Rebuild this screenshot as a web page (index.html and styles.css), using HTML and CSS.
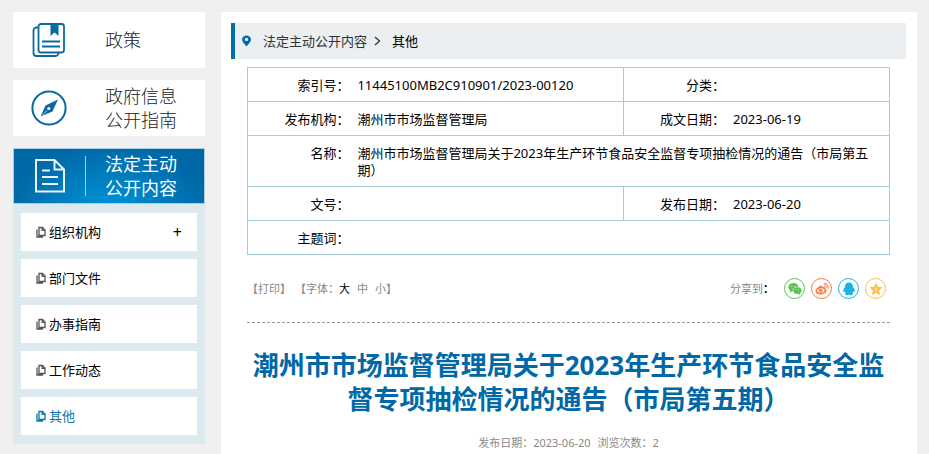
FILE: index.html
```
<!DOCTYPE html>
<html lang="zh-CN">
<head>
<meta charset="utf-8">
<meta name="viewport" content="width=device-width, initial-scale=1">
<title>潮州市市场监督管理局</title>
<link rel="stylesheet" href="styles.css">
</head>
<body>
<svg class="defs" aria-hidden="true">
  <symbol id="pages" viewBox="0 0 10 12">
    <path d="M3 1.500h3.500L9 4v5.500H3z M6.200 1.500V4.300H9 M1 3.500v7.500h6" fill="none" stroke="currentColor" stroke-width="1.300"/>
  </symbol>
</svg>
<div class="layout">
  <nav class="sidebar">
    <a class="card" href="#">
      <span class="card-icon">
        <svg width="34" height="34" viewBox="0 0 34 34" fill="none" stroke="#0a6aa0" stroke-width="1.800">
          <path d="M6.500 4.500H4.500a3 3 0 0 0-3 3v22.500a3 3 0 0 0 3 3h19a3 3 0 0 0 3-3"/>
          <rect x="6.500" y="1" width="25.500" height="28.500" rx="2.500"/>
          <path d="M18.500 1h8v12l-4-3.500-4 3.500z" fill="#0a6aa0" stroke="none"/>
          <path d="M10 18.500h18M10 23.500h18"/>
        </svg>
      </span>
      <span class="card-text">政策</span>
    </a>
    <a class="card" href="#">
      <span class="card-icon">
        <svg width="36" height="36" viewBox="0 0 36 36">
          <circle cx="18" cy="18" r="16.600" fill="none" stroke="#0a6aa0" stroke-width="2"/>
          <path d="M27 9.500 21.500 21.500 9.500 26.500 14.500 15.500z" fill="#0a6aa0"/>
          <circle cx="17.800" cy="18.500" r="1.500" fill="#fff"/>
          <path d="M11 25.500l5-5" stroke="#fff" stroke-width=".7"/>
        </svg>
      </span>
      <span class="card-text">政府信息<br>公开指南</span>
    </a>
    <div class="group">
      <a class="card active" href="#">
        <span class="card-icon">
          <svg width="32" height="34" viewBox="0 0 32 34" fill="none" stroke="#e8f4fb" stroke-width="2">
            <path d="M2 1h18.500L30 10.500V32.500H2z M20.500 1v9.500H30"/>
            <path d="M8 11.500h8M8 18h16M8 25h16"/>
          </svg>
        </span>
        <span class="card-text">法定主动<br>公开内容</span>
      </a>
      <ul class="submenu">
        <li><a href="#"><svg width="10" height="12"><use href="#pages"/></svg>组织机构</a><button type="button" aria-label="展开">+</button></li>
        <li><a href="#"><svg width="10" height="12"><use href="#pages"/></svg>部门文件</a></li>
        <li><a href="#"><svg width="10" height="12"><use href="#pages"/></svg>办事指南</a></li>
        <li><a href="#"><svg width="10" height="12"><use href="#pages"/></svg>工作动态</a></li>
        <li><a class="current" href="#"><svg width="10" height="12"><use href="#pages"/></svg>其他</a></li>
      </ul>
    </div>
  </nav>
  <main class="main">
    <div class="crumbs">
      <svg width="9" height="12" viewBox="0 0 8 12" preserveAspectRatio="none"><path fill-rule="evenodd" d="M4 .5a4 4 0 0 1 4 4C8 7 5.500 9 4 11.500 2.500 9 0 7 0 4.500a4 4 0 0 1 4-4zm0 2.300a1.600 1.600 0 1 0 0 3.200 1.600 1.600 0 0 0 0-3.200z" fill="#0068a6"/></svg>
      <a class="crumb-parent" href="#">法定主动公开内容</a>
      <svg width="7" height="10" viewBox="0 0 7 10"><path d="M1 1l4.500 4L1 9" fill="none" stroke="#333" stroke-width="1.300"/></svg>
      <a class="crumb-current" href="#">其他</a>
    </div>
    <div class="content">
      <table class="info">
        <colgroup><col class="c-label"><col class="c-wide"><col class="c-label"><col></colgroup>
        <tbody>
          <tr><th scope="row">索引号：</th><td>11445100MB2C910901/2023-00120</td><th scope="row">分类：</th><td></td></tr>
          <tr><th scope="row">发布机构：</th><td>潮州市市场监督管理局</td><th scope="row">成文日期：</th><td>2023-06-19</td></tr>
          <tr><th scope="row">名称：</th><td colspan="3">潮州市市场监督管理局关于2023年生产环节食品安全监督专项抽检情况的通告（市局第五期）</td></tr>
          <tr><th scope="row">文号：</th><td></td><th scope="row">发布日期：</th><td>2023-06-20</td></tr>
          <tr><th scope="row">主题词：</th><td colspan="3"></td></tr>
        </tbody>
      </table>
      <div class="tools">
        <div class="tool-text">
          <button type="button">【打印】</button>
          <span class="sizes">【字体：<button type="button" class="on">大</button><button type="button">中</button><button type="button">小</button>】</span>
        </div>
        <div class="share">
          <span class="share-label">分享到<b>：</b></span>
          <a class="wechat" href="#" aria-label="微信"><svg viewBox="0 0 16 16"><ellipse cx="6.200" cy="6" rx="5.800" ry="4.800"/><path d="M2.500 9 2 12l3-1.800z"/><ellipse cx="10.800" cy="9.800" rx="5" ry="4.200" stroke="#fff" stroke-width=".6"/><path d="M11 13l3 1.800-.5-2.800z"/><g fill="#fff"><circle cx="4.400" cy="4.800" r=".6"/><circle cx="8" cy="4.800" r=".6"/><circle cx="9.300" cy="8.800" r=".5"/><circle cx="12.300" cy="8.800" r=".5"/></g></svg></a>
          <a class="weibo" href="#" aria-label="微博"><svg viewBox="0 0 16 16"><path fill-rule="evenodd" d="M6.200 4.200c1.300-.5 2.100.2 1.700 1.700 2-.8 3.700-.4 3.300 1.300 2.900.9 2.600 4-.2 5.700-3.200 2-8.200 1.700-9.900-.5C-.8 9.800 3 5.300 6.200 4.200zM6.300 7.300c-2.400.2-4.200 1.500-4 3.100s2.200 2.500 4.600 2.200 4.200-1.700 4-3.200-2.200-2.400-4.600-2.100z"/><ellipse cx="6.300" cy="10.200" rx="2.500" ry="2.100"/><circle cx="5.700" cy="10.600" r=".7" fill="#fff"/><path d="M10 2c3.300-.8 5.800 2 4.800 5.500M10.300 4.300c1.700-.4 2.900.8 2.400 2.600" fill="none" stroke="currentColor" stroke-width="1.200"/></svg></a>
          <a class="qq" href="#" aria-label="QQ"><svg viewBox="0 0 16 16"><path d="M8 .5c3 0 4.700 2.200 4.600 5.200 1.500 2 2.500 4 1.800 5.600-.4.400-1-.2-1.400-.8-.2.900-.7 1.700-1.300 2.200 1.500.8 1 2.300-1.300 2.300-1.100 0-1.900-.3-2.400-.8-.5.500-1.300.8-2.400.8-2.300 0-2.800-1.500-1.300-2.300-.6-.5-1.100-1.300-1.300-2.200-.4.600-1 1.200-1.400.8C.9 9.700 1.900 7.700 3.400 5.700 3.300 2.700 5 .5 8 .5z"/></svg></a>
          <a class="qzone" href="#" aria-label="QQ空间"><svg viewBox="0 0 16 16"><path d="M8 .8l2.200 4.700 5.200.6-3.900 3.500 1.100 5.200L8 12.200l-4.600 2.600 1.100-5.200L.6 6.100l5.200-.6z"/><path d="M6 7h3.800L6.500 10h3.800" fill="none" stroke="#fff" stroke-width=".5"/></svg></a>
        </div>
      </div>
      <h1>潮州市市场监督管理局关于2023年生产环节食品安全监督专项抽检情况的通告（市局第五期）</h1>
      <p class="meta"><span>发布日期：2023-06-20</span><span>浏览次数：2</span></p>
    </div>
  </main>
</div>
</body>
</html>
```
FILE: styles.css
```
* { box-sizing: border-box; }

body {
  margin: 0;
  background: #f0f0f0;
  color: #000;
  font: 13px/17px "Noto Sans", "Noto Sans CJK SC", sans-serif;
}

a { color: inherit; text-decoration: none; }

button {
  padding: 0;
  border: 0;
  background: none;
  color: inherit;
  font: inherit;
  cursor: pointer;
}

.defs { position: absolute; width: 0; height: 0; }

.layout {
  display: flex;
  gap: 16px;
  min-height: 100vh;
  padding: 12px 12px 0 13px;
}

.sidebar {
  flex: none;
  display: flex;
  flex-direction: column;
  gap: 12px;
  width: 192px;
}

.card {
  display: flex;
  align-items: center;
  height: 56px;
  background: #fff;
  color: #222;
  font-size: 18px;
  font-weight: 300;
  line-height: 24px;
}

.card-icon {
  display: flex;
  justify-content: center;
  width: 72px;
}

.card-text { margin-left: 20px; }

.card.active {
  border: 1px solid #a9cfe6;
  background: radial-gradient(ellipse at 50% 110%, #0094d8, #0068a6 75%);
  color: #fff;
  font-weight: 400;
}

.active .card-icon { width: 71px; }

.active .card-text {
  margin-left: 0;
  padding-left: 20px;
  background: linear-gradient(#9fd0ea, #9fd0ea) 0 50% / 1px 40px no-repeat;
}

.submenu {
  display: flex;
  flex-direction: column;
  gap: 8px;
  margin: 0;
  padding: 9px 8px;
  background: #dce9ee;
  list-style: none;
}

.submenu li {
  display: flex;
  align-items: center;
  justify-content: space-between;
  height: 38px;
  padding: 0 15px;
  background: #fff;
}

.submenu a {
  display: flex;
  align-items: center;
  gap: 3px;
}

.submenu button { font-size: 16px; }
.submenu svg { color: #555; }
.submenu .current, .current svg { color: #0a75a8; }

.main {
  flex: 1;
  min-width: 0;
  padding: 11px 11px 0 10px;
  background: #fff;
}

.crumbs {
  display: flex;
  align-items: center;
  height: 36px;
  padding-left: 7px;
  border-left: 4px solid #0071a8;
  background: #ebeff2;
}

.crumb-parent { margin: 0 7px 0 12px; color: #333; }
.crumb-current { margin-left: 11px; }

.content { padding: 8px 16px 0; }

.info {
  width: 100%;
  border-collapse: collapse;
  table-layout: fixed;
}

.c-label { width: 16.5%; }
.c-wide { width: 42%; }

.info tr { border: 1px solid #a6cae0; }

.info th, .info td {
  height: 34px;
  padding: 9px 4px 7px;
  vertical-align: top;
}

.info th {
  border-left: 1px solid #a6cae0;
  font-weight: 400;
  text-align: right;
}

.info td[colspan] { padding-right: 20px; }

.tools {
  display: flex;
  align-items: center;
  justify-content: space-between;
  height: 68px;
  border-bottom: 1px dashed #999;
  color: #888;
  font-size: 11px;
}

.tool-text { display: flex; gap: 4px; }
.sizes .on { color: #000; }
.sizes button + button { margin-left: 7px; }

.share {
  display: flex;
  align-items: center;
  gap: 6px;
  padding-right: 4px;
}

.share-label { margin-right: 4px; }
.share b { color: #000; }

.share a {
  display: flex;
  align-items: center;
  justify-content: center;
  width: 21px;
  height: 21px;
  border: 1px solid;
  border-radius: 50%;
}

.share svg { width: 14px; height: 14px; fill: currentColor; }
.wechat { color: #5cc254; }
.weibo { color: #ff763b; }
.qq { color: #14b4e8; }
.qzone { color: #fdbe3d; }

h1 {
  margin: 25px 0 0;
  color: #0068a6;
  font-size: 26px;
  font-weight: 700;
  line-height: 34px;
  text-align: center;
}

.meta {
  display: flex;
  justify-content: center;
  gap: 7px;
  margin: 18px 0 0;
  color: #888;
  font-size: 11px;
}
```
